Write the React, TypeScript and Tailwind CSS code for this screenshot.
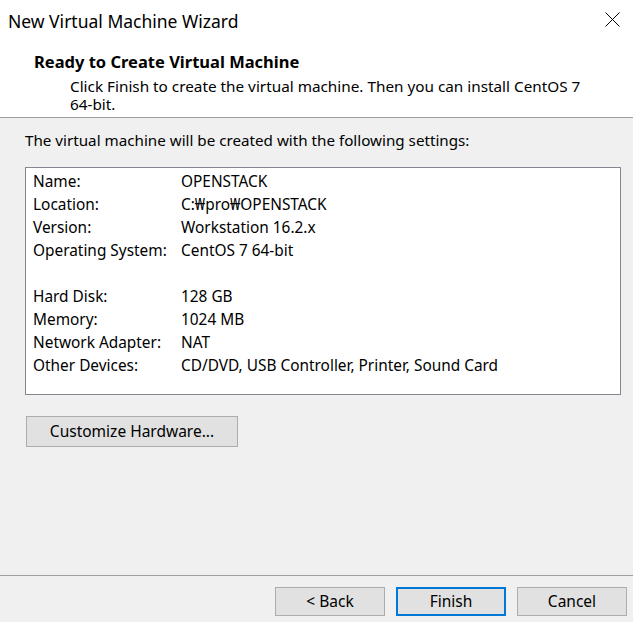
import React from "react";

const rows: [string, string][] = [
  ["Name:", "OPENSTACK"],
  ["Location:", "C:\u20A9pro\u20A9OPENSTACK"],
  ["Version:", "Workstation 16.2.x"],
  ["Operating System:", "CentOS 7 64-bit"],
  ["", ""],
  ["Hard Disk:", "128 GB"],
  ["Memory:", "1024 MB"],
  ["Network Adapter:", "NAT"],
  ["Other Devices:", "CD/DVD, USB Controller, Printer, Sound Card"],
];

function WinButton({ label, focused = false, className = "" }: { label: string; focused?: boolean; className?: string }) {
  return (
    <button
      className={
        "flex items-center justify-center bg-[#e1e1e1] text-[15.5px] text-black " +
        (focused ? "border-2 border-[#0078d7] " : "border border-[#adadad] ") +
        className
      }
    >
      {label}
    </button>
  );
}

export default function App() {
  return (
    <div
      className="flex h-[622px] w-[633px] flex-col bg-[#f0f0f0] text-black"
      style={{ fontFamily: '"Noto Sans", "Open Sans", sans-serif' }}
    >
      <div className="bg-white">
        <div className="flex h-[42px] items-start justify-between pl-[8px] pr-[13px]">
          <span className="mt-[9px] text-[17.5px] leading-[24px]">New Virtual Machine Wizard</span>
          <svg width="15" height="15" viewBox="0 0 15 15" className="mt-[12px]">
            <path d="M0.5 0.5 L14.5 14.5 M14.5 0.5 L0.5 14.5" stroke="#000" strokeWidth="1" fill="none" />
          </svg>
        </div>
        <div className="h-[76px] border-b border-[#a0a0a0] pl-[34px] pt-[9px]">
          <div className="text-[16.5px] font-bold leading-[22px]">Ready to Create Virtual Machine</div>
          <div className="mt-[4px] pl-[36px] pr-[40px] text-[15.3px] leading-[18px]">
            Click Finish to create the virtual machine. Then you can install CentOS 7 64-bit.
          </div>
        </div>
      </div>

      <div className="flex-1 px-[25px] pt-[12px]">
        <div className="text-[15.2px] leading-[20px]">The virtual machine will be created with the following settings:</div>
        <div className="mt-[17px] h-[228px] w-[596px] border border-[#828790] bg-white pl-[7px] pt-[2px]">
          {rows.map(([k, v], i) => (
            <div key={i} className="flex h-[23px] items-center text-[15.4px]">
              <span className="w-[148px]">{k}</span>
              <span>{v}</span>
            </div>
          ))}
        </div>
        <WinButton label="Customize Hardware..." className="ml-[1px] mt-[21px] h-[31px] w-[212px]" />
      </div>

      <div className="flex h-[47px] items-start justify-end gap-[11px] border-t border-[#a0a0a0] pr-[6px] pt-[11px]">
        <WinButton label="< Back" className="h-[29px] w-[110px]" />
        <WinButton label="Finish" focused className="h-[29px] w-[110px]" />
        <WinButton label="Cancel" className="h-[29px] w-[110px]" />
      </div>
    </div>
  );
}
